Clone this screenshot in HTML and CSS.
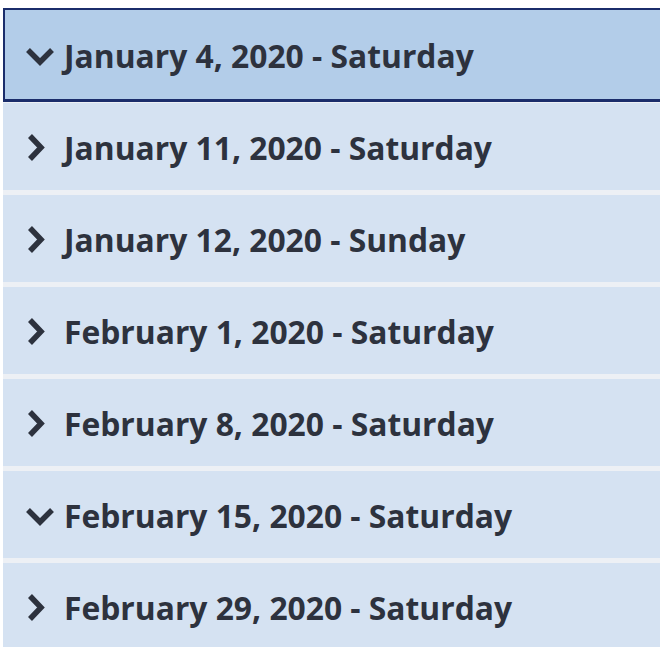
FILE: index.html
```html
<!DOCTYPE html>
<html lang="en">

<head>
    <meta charset="UTF-8">
    <meta name="viewport" content="width=device-width, initial-scale=1.0">
    <title>Dates</title>
    <link rel="stylesheet" href="styles.css">
</head>

<body>
    <div class="dates">
        <div class="day active">
            <svg class="chev" viewBox="0 0 30 30"><path d="M3 9 L15 21 L27 9" /></svg>
            <span>January 4, 2020 - Saturday</span>
        </div>
        <div class="day">
            <svg class="chev" viewBox="0 0 30 30"><path d="M5 3 L16 14.5 L5 26" /></svg>
            <span>January 11, 2020 - Saturday</span>
        </div>
        <div class="day">
            <svg class="chev" viewBox="0 0 30 30"><path d="M5 3 L16 14.5 L5 26" /></svg>
            <span>January 12, 2020 - Sunday</span>
        </div>
        <div class="day">
            <svg class="chev" viewBox="0 0 30 30"><path d="M5 3 L16 14.5 L5 26" /></svg>
            <span>February 1, 2020 - Saturday</span>
        </div>
        <div class="day">
            <svg class="chev" viewBox="0 0 30 30"><path d="M5 3 L16 14.5 L5 26" /></svg>
            <span>February 8, 2020 - Saturday</span>
        </div>
        <div class="day">
            <svg class="chev" viewBox="0 0 30 30"><path d="M3 9 L15 21 L27 9" /></svg>
            <span>February 15, 2020 - Saturday</span>
        </div>
        <div class="day">
            <svg class="chev" viewBox="0 0 30 30"><path d="M5 3 L16 14.5 L5 26" /></svg>
            <span>February 29, 2020 - Saturday</span>
        </div>
    </div>
</body>

</html>
```

FILE: styles.css
```css
* {
    margin: 0;
    padding: 0;
    box-sizing: border-box;
    font-family: "Open Sans", sans-serif;
}
body {
    background-color: #ffffff;
    overflow: hidden;
}
.dates {
    display: flex;
    flex-direction: column;
    gap: 5px;
    margin: 8px -20px 0 3px;
    background-color: #edf0f5;
}
.day {
    display: flex;
    align-items: center;
    height: 87px;
    padding-top: 2px;
    padding-left: 22px;
    background-color: #d5e2f2;
    color: #2d323e;
    font-size: 31.8px;
    font-weight: 700;
}
.day.active {
    height: 94px;
    margin-bottom: -4px;
    padding-left: 20px;
    background-color: #b3cde9;
    border: 2px solid #1b2d6b;
    border-bottom-width: 3px;
}
.chev {
    width: 30px;
    height: 30px;
    margin-right: 9px;
    fill: none;
    stroke: #2d323e;
    stroke-width: 5.5;
    stroke-linecap: butt;
    stroke-linejoin: miter;
}
```
